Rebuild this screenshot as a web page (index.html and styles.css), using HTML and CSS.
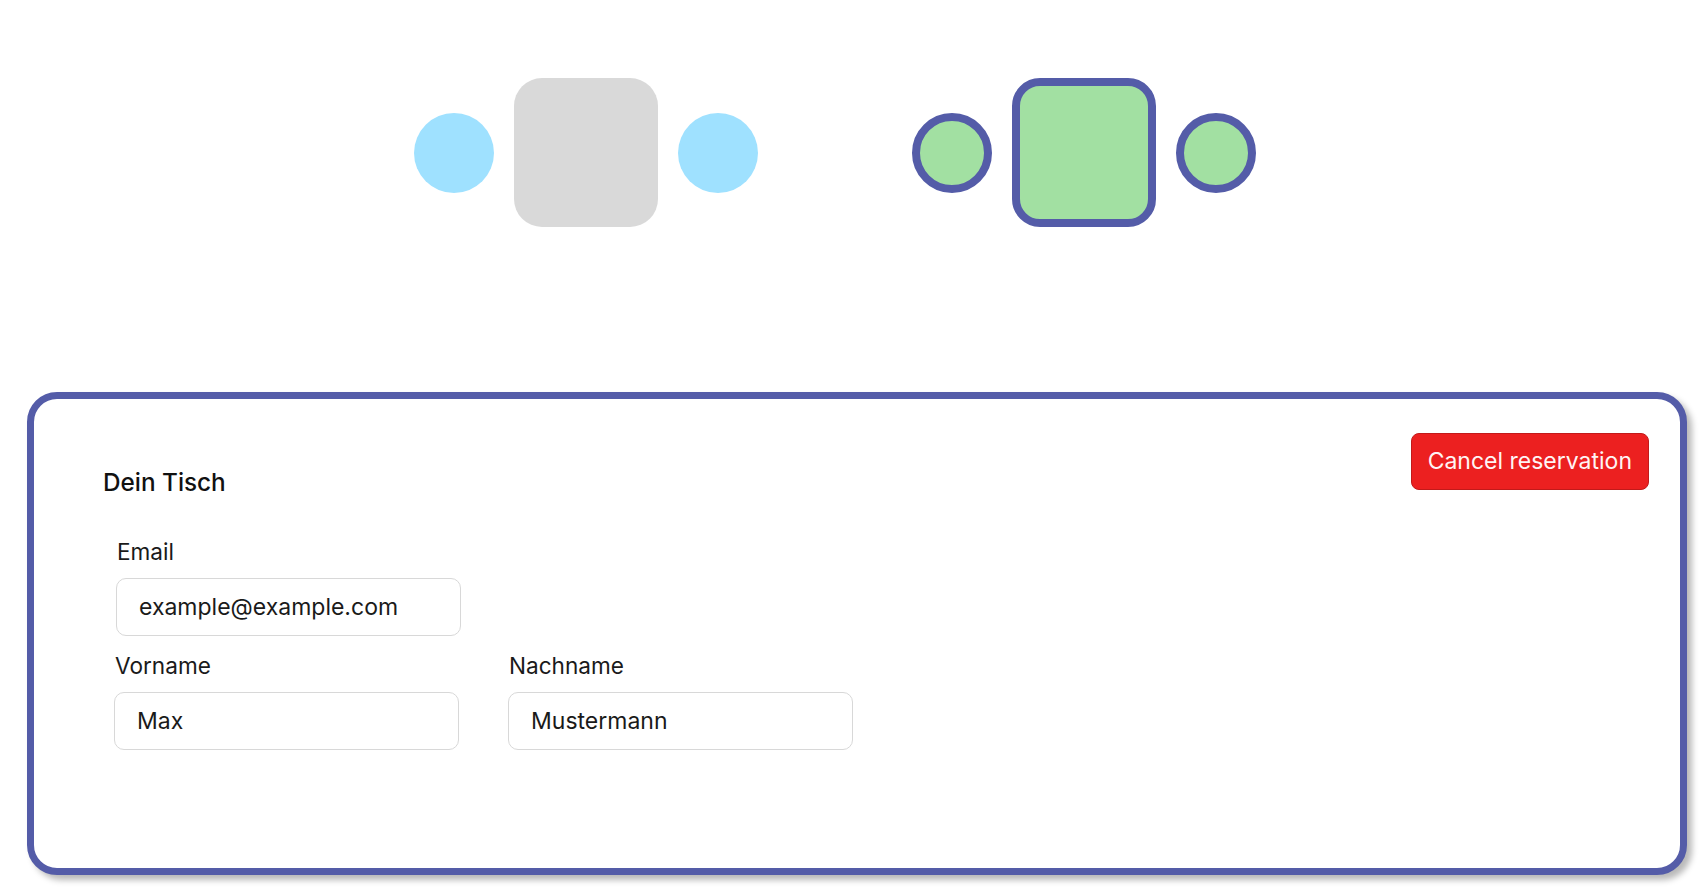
FILE: index.html
```html
<!DOCTYPE html>
<html lang="de">
<head>
<meta charset="utf-8">
<title>Reservierung</title>
<link rel="stylesheet" href="styles.css">
</head>
<body>
<main class="page">
  <section class="tables">
    <div class="table-group">
      <div class="seat"></div>
      <div class="table"></div>
      <div class="seat"></div>
    </div>
    <div class="table-group selected">
      <div class="seat"></div>
      <div class="table"></div>
      <div class="seat"></div>
    </div>
  </section>

  <section class="card">
    <div class="card-header">
      <h2 class="card-title">Dein Tisch</h2>
      <button class="btn-cancel" type="button">Cancel reservation</button>
    </div>
    <form class="form">
      <div class="field field-email">
        <label class="label" for="email">Email</label>
        <input class="input" id="email" type="text" value="example@example.com">
      </div>
      <div class="name-row">
        <div class="field">
          <label class="label" for="vorname">Vorname</label>
          <input class="input" id="vorname" type="text" value="Max">
        </div>
        <div class="field">
          <label class="label" for="nachname">Nachname</label>
          <input class="input" id="nachname" type="text" value="Mustermann">
        </div>
      </div>
    </form>
  </section>
</main>
</body>
</html>
```

FILE: styles.css
```css
* {
  box-sizing: border-box;
}

html, body {
  margin: 0;
  padding: 0;
  background: #ffffff;
}

body {
  font-family: Inter, "Noto Sans", "Liberation Sans", sans-serif;
  color: #111111;
}

.page {
  width: 1708px;
  height: 895px;
  overflow: hidden;
}

.tables {
  display: flex;
  gap: 154px;
  padding: 78px 0 0 414px;
  height: 227px;
}

.table-group {
  display: flex;
  align-items: center;
  gap: 20px;
  height: 149px;
}

.seat {
  width: 80px;
  height: 80px;
  border-radius: 50%;
  background: #9fe1ff;
}

.table {
  width: 144px;
  height: 149px;
  border-radius: 28px;
  background: #d9d9d9;
}

.selected .seat,
.selected .table {
  background: #a2e0a2;
  border: 8px solid #545ca8;
}

.card {
  margin: 165px 0 0 27px;
  width: 1660px;
  height: 483px;
  border: 7px solid #545ca8;
  border-radius: 30px;
  background: #ffffff;
  box-shadow: 5px 5px 6px rgba(0, 0, 0, 0.28);
  padding: 34px 31px 0 69px;
}

.card-header {
  display: flex;
  justify-content: space-between;
  align-items: flex-start;
}

.card-title {
  margin: 35px 0 0 0;
  font-size: 24.3px;
  line-height: 29px;
  font-weight: 500;
  color: #111111;
}

.btn-cancel {
  margin: 0;
  height: 57px;
  padding: 0 16px;
  border: 1px solid #c21a1a;
  border-radius: 8px;
  background: #ec2020;
  color: #fff4f4;
  font-family: inherit;
  font-size: 23px;
  line-height: 55px;
  font-weight: 400;
}

.form {
  margin-top: 41px;
  padding-left: 11px;
}

.field {
  display: flex;
  flex-direction: column;
  gap: 13px;
}

.field-email {
  margin-left: 2px;
}

.label {
  font-size: 22.6px;
  line-height: 27px;
  padding-left: 1px;
  color: #1a1a1a;
}

.input {
  width: 345px;
  height: 58px;
  margin: 0;
  padding: 0 22px;
  border: 1px solid #d8d8d8;
  border-radius: 10px;
  background: #ffffff;
  font-family: inherit;
  font-size: 23px;
  color: #1a1a1a;
  outline: none;
}

.name-row {
  display: flex;
  gap: 49px;
  margin-top: 16px;
}
```
